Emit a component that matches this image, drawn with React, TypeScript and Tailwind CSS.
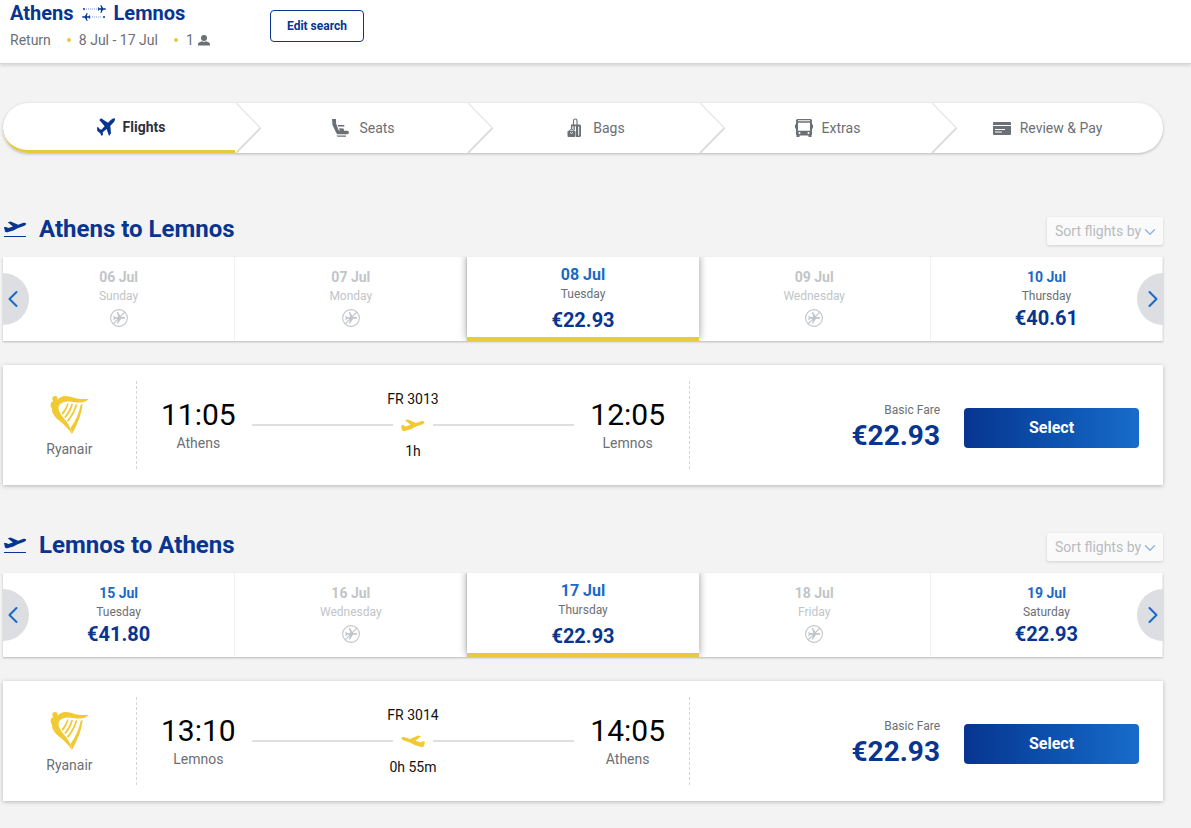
import { useState } from 'react';
import clsx from 'clsx';
import { ChevronDown, ChevronLeft, ChevronRight } from 'lucide-react';

interface Day {
  date: string;
  weekday: string;
  price?: string;
}

interface Journey {
  id: string;
  from: string;
  to: string;
  days: Day[];
  flight: string;
  departure: string;
  arrival: string;
  duration: string;
  fare: string;
  inbound?: boolean;
}

const journeys: Journey[] = [
  {
    id: 'outbound',
    from: 'Athens',
    to: 'Lemnos',
    days: [
      { date: '06 Jul', weekday: 'Sunday' },
      { date: '07 Jul', weekday: 'Monday' },
      { date: '08 Jul', weekday: 'Tuesday', price: '€22.93' },
      { date: '09 Jul', weekday: 'Wednesday' },
      { date: '10 Jul', weekday: 'Thursday', price: '€40.61' },
    ],
    flight: 'FR 3013',
    departure: '11:05',
    arrival: '12:05',
    duration: '1h',
    fare: '€22.93',
  },
  {
    id: 'inbound',
    from: 'Lemnos',
    to: 'Athens',
    days: [
      { date: '15 Jul', weekday: 'Tuesday', price: '€41.80' },
      { date: '16 Jul', weekday: 'Wednesday' },
      { date: '17 Jul', weekday: 'Thursday', price: '€22.93' },
      { date: '18 Jul', weekday: 'Friday' },
      { date: '19 Jul', weekday: 'Saturday', price: '€22.93' },
    ],
    flight: 'FR 3014',
    departure: '13:10',
    arrival: '14:05',
    duration: '0h 55m',
    fare: '€22.93',
    inbound: true,
  },
];

const PLANE =
  'M21 16v-2l-8-5V3.500a1.500 1.500 0 0 0-3 0V9l-8 5v2l8-2.500V19l-2 1.500V22l3.500-1 3.500 1v-1.500L13 19v-5.500z';
const TAKEOFF =
  'M0 6.500 2.300 6.300 4.500 7.500 9.500 5.800 4 1.200 7 .500 15 3.900 20 2.200C21.600 1.700 23 1.900 23.500 2.700 23.700 3.700 22.600 4.800 21 5.400L14.500 7.800 10 10.200 4.400 11.700C2.400 12.200 1.500 11.900 1 11Z';

const ReturnArrows = () => (
  <svg className="h-4 w-6" viewBox="0 0 24 16" fill="#073590" aria-hidden="true">
    <circle cx="2" cy="4" r="1" />
    <path d="M4 4h14" stroke="#073590" strokeWidth="1" strokeDasharray="1 1" opacity=".5" />
    <path d="M24 4c0-.5-.6-.7-1.300-.7h-1.500L19.200 0h-.8l.8 3.300h-2l-.8-1h-.6l.4 1.700-.4 1.700h.6l.8-1h2L18.400 8h.8l2-3.300h1.500C23.400 4.700 24 4.500 24 4z" />
    <circle cx="22" cy="12" r="1" />
    <path d="M6 12h14" stroke="#073590" strokeWidth="1" strokeDasharray="1 1" opacity=".5" />
    <path d="M0 12c0-.5.6-.7 1.300-.7h1.500L4.800 8h.8l-.8 3.300h2l.8-1h.6l-.4 1.700.4 1.700h-.6l-.8-1h-2l.8 3.300h-.8l-2-3.300H1.300C.6 12.700 0 12.500 0 12z" />
  </svg>
);

const PersonIcon = () => (
  <svg className="h-3 w-3" viewBox="0 0 12 12" fill="#6b6f76" aria-hidden="true">
    <circle cx="6" cy="4" r="3" />
    <path d="M0 11.500V10C0 8.400 2.500 7.600 4 7.200c1.200.8 2.800.8 4 0 1.500.4 4 1.200 4 2.800v1.500z" />
  </svg>
);

const FlightIcon = () => (
  <svg className="h-[18px] w-[18px]" viewBox="0 0 54 54" fill="#073590" aria-hidden="true">
    <path d="M53 1C56 6 51 12 46 17L40 23 42 46 36 54 29 33 17 43 18 50 14 54 9 45 1 39 0 28 4 28 8 33 13 35 23 25 7 6 12 1 33 14 38 9C44 3 50-1 53 1Z" />
  </svg>
);

const SeatIcon = () => (
  <svg className="h-5 w-5" viewBox="0 0 20 20" fill="#6b6f76" aria-hidden="true">
    <path d="M1 1h4l.1 4.500 2.400 6.500 1.300.8h7.400c2.200 0 2.300 3.400.3 3.400H7.500c-1.300 0-2-.6-2.500-1.800L1.500 7z" />
    <path d="M6.600 7h6.700v1.400H7.100zM8 10.200l4.500.3.800 2.800H9z" />
    <path d="M5.500 17.600h9.500v1.200H6.500z" />
  </svg>
);

const BagsIcon = () => (
  <svg className="h-5 w-5" viewBox="0 0 20 20" aria-hidden="true">
    <path d="M8.500 7V2.800Q8.500 1 10.200 1T12 2.800V7" fill="none" stroke="#6b6f76" strokeWidth="1.100" />
    <path
      fill="#6b6f76"
      d="M6 6.500h8.500a1.500 1.500 0 0 1 1.500 1.500V18l-1 1h-4V8.300h-1.200V12H8.500V8.300H7.300V11H6z"
    />
    <path d="M13.700 8.500v9" stroke="#fff" strokeWidth="1" />
    <path d="M4.500 13.500v-.8q0-1.200 2-1.200t2 1.200v.8" fill="none" stroke="#6b6f76" />
    <rect x="2.500" y="12.800" width="8" height="6.200" rx="1" fill="#6b6f76" />
    <path d="M5 14.500q1.500 1.800 3 0" fill="none" stroke="#fff" strokeWidth=".9" />
  </svg>
);

const BusIcon = () => (
  <svg className="h-5 w-5" viewBox="0 0 20 20" aria-hidden="true">
    <path
      fill="#6b6f76"
      fillRule="evenodd"
      d="M3.500 1h13A1.500 1.500 0 0 1 18 2.500V6.500h1v4h-1V17h-.5v2h-3v-1.500h-9V19h-3v-2H2v-6.500H1v-4h1v-4A1.500 1.500 0 0 1 3.500 1zM4 2.300v.9h12v-.9zM4 4.700v8h12v-8z"
    />
    <circle cx="5.500" cy="15" r="1" fill="#fff" />
    <circle cx="14.500" cy="15" r="1" fill="#fff" />
  </svg>
);

const CardIcon = () => (
  <svg className="h-5 w-5" viewBox="0 0 20 20" aria-hidden="true">
    <rect x="1" y="4" width="18" height="13" rx="1" fill="#6b6f76" />
    <path d="M1 7.500h18M3 11.500h10M3 14h7" stroke="#fff" strokeWidth="1" />
  </svg>
);

const NoFlightIcon = () => (
  <svg className="h-[18px] w-[18px]" viewBox="0 0 18 18" aria-hidden="true">
    <circle cx="9" cy="9" r="8.400" fill="none" stroke="#c1c5c9" strokeWidth="1.100" />
    <g transform="rotate(90 9 9) translate(1.900 1.600) scale(.6)">
      <path d={PLANE} fill="#c1c5c9" />
    </g>
    <path d="M3.200 14.800 14.800 3.200" stroke="#c1c5c9" strokeWidth="1.200" />
  </svg>
);

const HarpLogo = () => (
  <svg className="h-10 w-10" viewBox="0 0 120 120" aria-hidden="true">
    <g fill="#f1c933">
      <circle cx="15" cy="11" r="8" />
      <path d="M22 15C30 6 37 3 46 3 66 4 76 14 116 12 109 19 102 21 97 22 78 25 62 17 47 20 35 22 28 27 26 34 23 50 36 64 49 79 58 91 63 102 66 118 56 102 45 92 30 79 14 65 5 55 6 41L3 36C0 27 3 20 11 18Z" />
      <path d="M98 27C95 56 84 86 66 117 65 110 63 104 61 99 78 77 87 53 92 29Z" />
      <path d="M51 26 56 25C53 38 47 50 38 60L35 54C43 45 48 36 51 26ZM64 26 69 27C65 43 58 57 46 70L43 65C53 53 60 40 64 26ZM77 28 82 29C77 47 67 65 54 81L51 76C64 61 72 45 77 28Z" />
    </g>
  </svg>
);

const TakeoffIcon = () => (
  <svg className="h-[18px] w-6" viewBox="0 0 24 18" fill="#073590" aria-hidden="true">
    <path d={TAKEOFF} transform="translate(1 1) scale(.94)" />
    <path d="M1 16h22v1H1z" />
  </svg>
);

const steps = [
  { label: 'Flights', icon: <FlightIcon /> },
  { label: 'Seats', icon: <SeatIcon /> },
  { label: 'Bags', icon: <BagsIcon /> },
  { label: 'Extras', icon: <BusIcon /> },
  { label: 'Review & Pay', icon: <CardIcon /> },
];

const Header = () => (
  <header className="flex h-16 items-start border-b border-[#d6d6d6] bg-white pl-2.5 shadow-[0_1px_4px_rgba(0,0,0,0.16)]">
    <div className="w-[260px]">
      <h1 className="flex items-center gap-2 text-xl leading-[26px] font-bold text-[#073590]">
        Athens <ReturnArrows /> Lemnos
      </h1>
      <div className="mt-1 flex items-center text-sm leading-5 text-[#6b6f76]">
        <span>Return</span>
        <span className="mr-2 ml-4 h-1 w-1 rounded-full bg-[#e5c945]" />
        <span>8 Jul - 17 Jul</span>
        <span className="mr-2 ml-4 h-1 w-1 rounded-full bg-[#e5c945]" />
        <span className="mr-1">1</span>
        <PersonIcon />
      </div>
    </div>
    <button className="mt-2.5 h-8 rounded border border-[#073590] px-4 text-xs font-bold text-[#073590]">
      Edit search
    </button>
  </header>
);

const Steps = () => (
  <nav aria-label="Booking steps">
    <ol className="flex h-[50px] rounded-full bg-white shadow-[0_1px_3px_rgba(0,0,0,0.25)]">
      {steps.map((step, i) => (
        <li
          key={step.label}
          className={clsx(
            'relative flex flex-1',
            i === 0 && 'rounded-l-full border-b-[3px] border-[#e9c842]'
          )}
        >
          <a
            href={`#step-${i + 1}`}
            className={clsx(
              'flex flex-1 items-center justify-center gap-2 text-sm',
              i < steps.length - 1 && 'pl-6',
              i === 0 ? 'pt-px font-bold text-[#2e333b]' : 'pb-px text-[#6b6f76]'
            )}
          >
            {step.icon}
            {step.label}
          </a>
          {i < steps.length - 1 && (
            <svg
              className="absolute top-0 left-full h-[50px] w-[27px]"
              viewBox="0 0 27 50"
              fill="none"
              aria-hidden="true"
            >
              <path d="M1 0 25.500 25" stroke="#e8e8e8" strokeWidth="1.500" />
              <path d="M25.500 25 1 50" stroke="#dcdcdc" strokeWidth="1.800" />
            </svg>
          )}
        </li>
      ))}
    </ol>
  </nav>
);

const DayStrip = ({ days }: { days: Day[] }) => {
  const [selected, setSelected] = useState(2);

  return (
    <div className="relative flex h-[84px] bg-white shadow-[0_1px_2px_rgba(0,0,0,0.25)]">
      {days.map((day, i) => {
        const active = i === selected;
        return (
          <button
            key={day.date}
            disabled={!day.price}
            onClick={() => setSelected(i)}
            className={clsx(
              'flex flex-1 flex-col items-center border-[#f1f1f1]',
              active
                ? 'z-10 border-b-4 border-b-[#e9c842] bg-white pt-2 shadow-[0_-2px_8px_rgba(0,0,0,0.4)] [clip-path:inset(0_-12px)]'
                : 'pt-2.5 not-last:border-r'
            )}
          >
            <span
              className={clsx(
                'leading-5 font-bold',
                active ? 'text-base' : 'text-sm',
                day.price ? 'text-[#1a69c7]' : 'text-[#c1c5c9]'
              )}
            >
              {day.date}
            </span>
            <span className={clsx('text-xs leading-[18px]', day.price ? 'text-[#6b6f76]' : 'text-[#c1c5c9]')}>
              {day.weekday}
            </span>
            {day.price ? (
              <span className={clsx('text-xl leading-[26px] font-bold text-[#073590]', active && 'mt-1')}>
                {day.price}
              </span>
            ) : (
              <span className="mt-1">
                <NoFlightIcon />
              </span>
            )}
          </button>
        );
      })}
      <button
        aria-label="Previous dates"
        className="absolute top-4 left-0 z-20 flex h-[52px] w-[26px] items-center justify-center rounded-r-full bg-[#dcdee1] pr-1.5 text-[#1a69c7]"
      >
        <ChevronLeft size={28} strokeWidth={1.75} className="shrink-0" />
      </button>
      <button
        aria-label="Next dates"
        className="absolute top-4 right-0 z-20 flex h-[52px] w-[26px] items-center justify-center rounded-l-full bg-[#dcdee1] pl-1.5 text-[#1a69c7]"
      >
        <ChevronRight size={28} strokeWidth={1.75} className="shrink-0" />
      </button>
    </div>
  );
};

const TimeBlock = ({ time, place }: { time: string; place: string }) => (
  <div className="text-center">
    <div className="text-3xl leading-9 text-black">{time}</div>
    <div className="text-sm leading-5 text-[#6b6f76]">{place}</div>
  </div>
);

const FlightCard = ({ journey }: { journey: Journey }) => (
  <article className="mt-6 flex h-[120px] items-center bg-white shadow-[0_1px_4px_rgba(0,0,0,0.25)]">
    <div className="flex h-[88px] w-[134px] flex-col items-center justify-center border-r border-dashed border-[#d4d6d9] pt-1">
      <HarpLogo />
      <span className="mt-1 text-sm leading-5 text-[#6b6f76]">Ryanair</span>
    </div>
    <div className="flex h-[88px] flex-1 items-center gap-4 border-r border-dashed border-[#d4d6d9] px-6">
      <TimeBlock time={journey.departure} place={journey.from} />
      <div className="flex-1 text-center text-sm text-[#111]">
        <div className="leading-5">{journey.flight}</div>
        <div className="my-2 flex items-center gap-2">
          <span className="h-0.5 flex-1 bg-[#dddfe1]" />
          <svg
            className={clsx('h-4 w-6', journey.inbound && '-scale-x-100')}
            viewBox="0 0 24 16"
            fill="#f1c933"
            aria-hidden="true"
          >
            <path d={TAKEOFF} transform="translate(0 2)" />
          </svg>
          <span className="h-0.5 flex-1 bg-[#dddfe1]" />
        </div>
        <div className="leading-5">{journey.duration}</div>
      </div>
      <TimeBlock time={journey.arrival} place={journey.to} />
    </div>
    <div className="flex w-[473px] items-center justify-end gap-6 pt-1.5 pr-6">
      <div className="text-right">
        <div className="text-xs leading-4 text-[#6b6f76]">Basic Fare</div>
        <div className="text-[28px] leading-9 font-bold text-[#073590]">{journey.fare}</div>
      </div>
      <button className="h-10 w-[175px] rounded bg-linear-to-r from-[#073590] to-[#176ccb] text-base font-bold text-white">
        Select
      </button>
    </div>
  </article>
);

const JourneySection = ({ journey }: { journey: Journey }) => (
  <section className="mb-12">
    <div className="mb-3 flex h-7 items-center justify-between">
      <h2 className="flex items-center gap-3 pb-1 text-2xl leading-8 font-bold text-[#073590]">
        <TakeoffIcon />
        {journey.from} to {journey.to}
      </h2>
      <div className="relative">
        <select
          aria-label={`Sort ${journey.from} to ${journey.to}`}
          defaultValue="default"
          className="h-7 w-[116px] appearance-none rounded-xs bg-[#fafafa] px-2 text-sm text-[#b9bbbe] shadow-[0_1px_3px_rgba(0,0,0,0.15)]"
        >
          <option value="default">Sort flights by</option>
          <option value="price">Price</option>
          <option value="time">Departure time</option>
        </select>
        <ChevronDown
          size={18}
          strokeWidth={1.75}
          className="pointer-events-none absolute top-1.5 right-1 text-[#8db4e0]"
        />
      </div>
    </div>
    <DayStrip days={journey.days} />
    <FlightCard journey={journey} />
  </section>
);

const App = () => {
  return (
    <div className="min-h-screen overflow-x-hidden bg-[#f3f3f3] font-['Roboto',sans-serif]">
      <Header />
      <main className="pt-[39px] pr-7 pl-[3px]">
        <Steps />
        <div className="mt-16">
          {journeys.map((journey) => (
            <JourneySection key={journey.id} journey={journey} />
          ))}
        </div>
      </main>
    </div>
  );
};

export default App;
